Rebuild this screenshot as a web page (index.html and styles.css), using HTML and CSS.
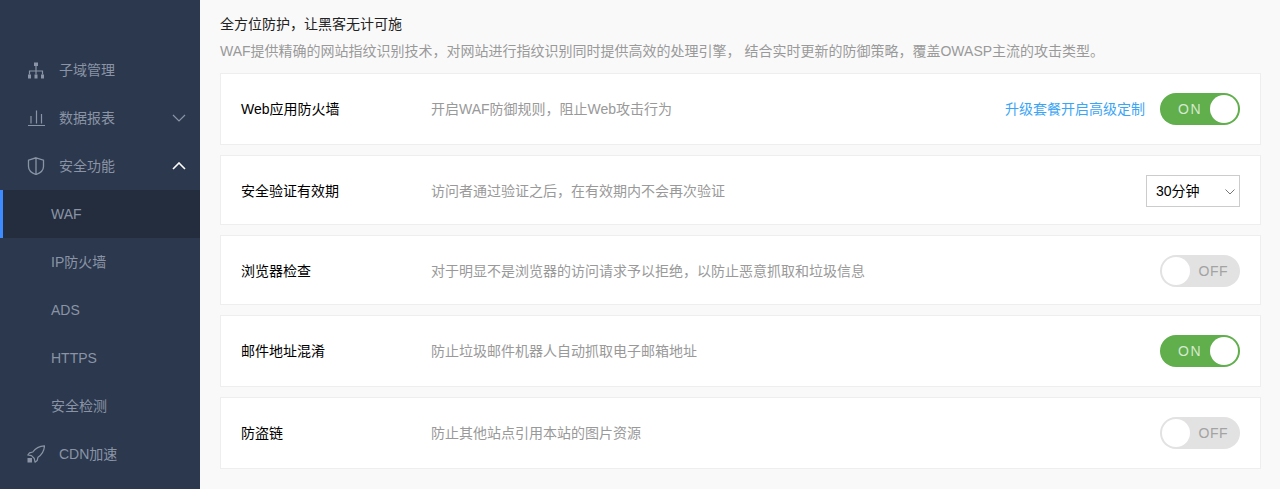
FILE: index.html
```html
<!DOCTYPE html>
<html lang="zh-CN">
<head>
  <meta charset="UTF-8">
  <title>安全功能 - WAF</title>
  <link rel="stylesheet" href="styles.css">
</head>
<body>
  <div class="sidebar">
    <a class="menu-item">
      <svg class="menu-icon" viewBox="0 0 18 18"><path d="M9 4.500v9M2.500 13.500V10h13v3.500" fill="none" stroke="currentColor" stroke-width="1.200"/><rect x="7" y="1.500" width="4" height="3.500" fill="currentColor"/><rect x="1" y="13.500" width="3" height="4" fill="currentColor"/><rect x="7.500" y="13.500" width="3" height="4" fill="currentColor"/><rect x="14" y="13.500" width="3" height="4" fill="currentColor"/></svg>
      <span>子域管理</span>
    </a>
    <a class="menu-item">
      <svg class="menu-icon" viewBox="0 0 18 18"><path d="M1 16.500h17M4 14.500V7M9.500 14.500V1.500M14.500 14.500V5" fill="none" stroke="currentColor" stroke-width="1.200"/></svg>
      <span>数据报表</span>
      <svg class="menu-arrow" viewBox="0 0 14 8"><path d="M1 1l6 6 6-6" fill="none" stroke="currentColor" stroke-width="1.200"/></svg>
    </a>
    <a class="menu-item">
      <svg class="menu-icon" viewBox="0 0 18 18"><path d="M9 .8l7.500 2.400v6.300c0 3.900-3.400 6.600-7.500 8-4.100-1.400-7.500-4.100-7.500-8V3.200zM9 1v16.500" fill="none" stroke="currentColor" stroke-width="1.300"/></svg>
      <span>安全功能</span>
      <svg class="menu-arrow menu-arrow-open" viewBox="0 0 14 8"><path d="M1 7l6-6 6 6" fill="none" stroke="currentColor" stroke-width="1.600"/></svg>
    </a>
    <a class="menu-item sub-item active">WAF</a>
    <a class="menu-item sub-item">IP防火墙</a>
    <a class="menu-item sub-item">ADS</a>
    <a class="menu-item sub-item">HTTPS</a>
    <a class="menu-item sub-item">安全检测</a>
    <a class="menu-item">
      <svg class="menu-icon" viewBox="0 0 18 18"><path d="M17.500 .8C12.500 1 8.500 3 5.800 7L2.500 7.800.8 10l3.700.7 2.800 2.800.7 3.700 2.200-1.700.8-3.300c4-2.700 6.200-6.700 6.500-11.400z" fill="none" stroke="currentColor" stroke-width="1.200" stroke-linejoin="round"/><rect x=".5" y="13" width="4.500" height="4.500" fill="currentColor"/></svg>
      <span>CDN加速</span>
    </a>
  </div>

  <div class="main">
    <h1 class="page-title">全方位防护，让黑客无计可施</h1>
    <p class="page-desc">WAF提供精确的网站指纹识别技术，对网站进行指纹识别同时提供高效的处理引擎， 结合实时更新的防御策略，覆盖OWASP主流的攻击类型。</p>

    <div class="card card-tall">
      <div class="card-name">Web应用防火墙</div>
      <div class="card-desc">开启WAF防御规则，阻止Web攻击行为</div>
      <a class="upgrade-link">升级套餐开启高级定制</a>
      <div class="switch on"><span class="switch-text">ON</span><span class="switch-knob"></span></div>
    </div>

    <div class="card">
      <div class="card-name">安全验证有效期</div>
      <div class="card-desc">访问者通过验证之后，在有效期内不会再次验证</div>
      <div class="select-box">
        <select class="period-select">
          <option>30分钟</option>
          <option>1小时</option>
          <option>1天</option>
        </select>
        <svg class="select-arrow" viewBox="0 0 10 6"><path d="M.5.500L5 5 9.500.500" fill="none" stroke="currentColor" stroke-width="1"/></svg>
      </div>
    </div>

    <div class="card">
      <div class="card-name">浏览器检查</div>
      <div class="card-desc">对于明显不是浏览器的访问请求予以拒绝，以防止恶意抓取和垃圾信息</div>
      <div class="switch"><span class="switch-knob"></span><span class="switch-text">OFF</span></div>
    </div>

    <div class="card card-tall">
      <div class="card-name">邮件地址混淆</div>
      <div class="card-desc">防止垃圾邮件机器人自动抓取电子邮箱地址</div>
      <div class="switch on"><span class="switch-text">ON</span><span class="switch-knob"></span></div>
    </div>

    <div class="card card-tall">
      <div class="card-name">防盗链</div>
      <div class="card-desc">防止其他站点引用本站的图片资源</div>
      <div class="switch"><span class="switch-knob"></span><span class="switch-text">OFF</span></div>
    </div>
  </div>
</body>
</html>
```

FILE: styles.css
```css
html, body {
    height: 100%;
}

body {
    margin: 0;
    display: flex;
    overflow: hidden;
    font-family: "Liberation Sans", "Noto Sans CJK SC", sans-serif;
    font-size: 14px;
    line-height: 20px;
    background-color: #f9f9f9;
    color: #000;
}

.sidebar {
    width: 200px;
    flex-shrink: 0;
    padding-top: 46px;
    box-sizing: border-box;
    background-color: #2c384d;
}

.menu-item {
    display: flex;
    align-items: center;
    height: 48px;
    padding-left: 27px;
    padding-right: 14px;
    box-sizing: border-box;
    color: #8a94a6;
}

.menu-icon {
    width: 18px;
    height: 18px;
    margin-right: 14px;
}

.menu-arrow {
    width: 14px;
    height: 8px;
    margin-left: auto;
}

.menu-arrow-open {
    color: #fff;
}

.sub-item {
    padding-left: 51px;
}

.active {
    background-color: #232d3e;
    border-left: 3px solid #3d8bff;
    padding-left: 48px;
}

.main {
    flex: 1;
    padding: 0 19px 0 20px;
}

.page-title {
    margin: 14px 0 0;
    font-size: 14px;
    font-weight: normal;
    line-height: 20px;
    color: #222;
}

.page-desc {
    margin: 7px 0 12px;
    line-height: 20px;
    color: #999;
}

.card {
    display: flex;
    align-items: center;
    height: 70px;
    margin-bottom: 10px;
    padding: 2px 20px 0;
    box-sizing: border-box;
    background-color: #fff;
    border: 1px solid #eee;
}

.card-tall {
    height: 72px;
    padding-top: 0;
}

.card-name {
    width: 190px;
    flex-shrink: 0;
}

.card-desc {
    flex: 1;
    color: #999;
}

.upgrade-link {
    margin-right: 15px;
    color: #3ba5f5;
}

.switch {
    display: flex;
    align-items: center;
    justify-content: space-between;
    width: 80px;
    height: 32px;
    padding: 2px;
    box-sizing: border-box;
    border-radius: 16px;
    background-color: #e2e2e2;
    color: #a3a3a3;
}

.switch.on {
    background-color: #60ae4c;
    color: #d5e9cf;
}

.switch-text {
    padding-right: 10px;
    letter-spacing: 0.5px;
}

.switch.on .switch-text {
    padding: 0 0 0 16px;
    letter-spacing: 1.5px;
}

.switch-knob {
    width: 28px;
    height: 28px;
    border-radius: 50%;
    background-color: #fff;
}

.select-box {
    position: relative;
    width: 94px;
    height: 32px;
}

.period-select {
    appearance: none;
    display: block;
    width: 100%;
    height: 100%;
    padding: 0 0 0 9px;
    border: 1px solid #ccc;
    border-radius: 0;
    background-color: #fff;
    font-family: inherit;
    font-size: 14px;
    color: #000;
}

.select-arrow {
    position: absolute;
    top: 14px;
    right: 5px;
    width: 10px;
    height: 6px;
    color: #777;
    pointer-events: none;
}
```
